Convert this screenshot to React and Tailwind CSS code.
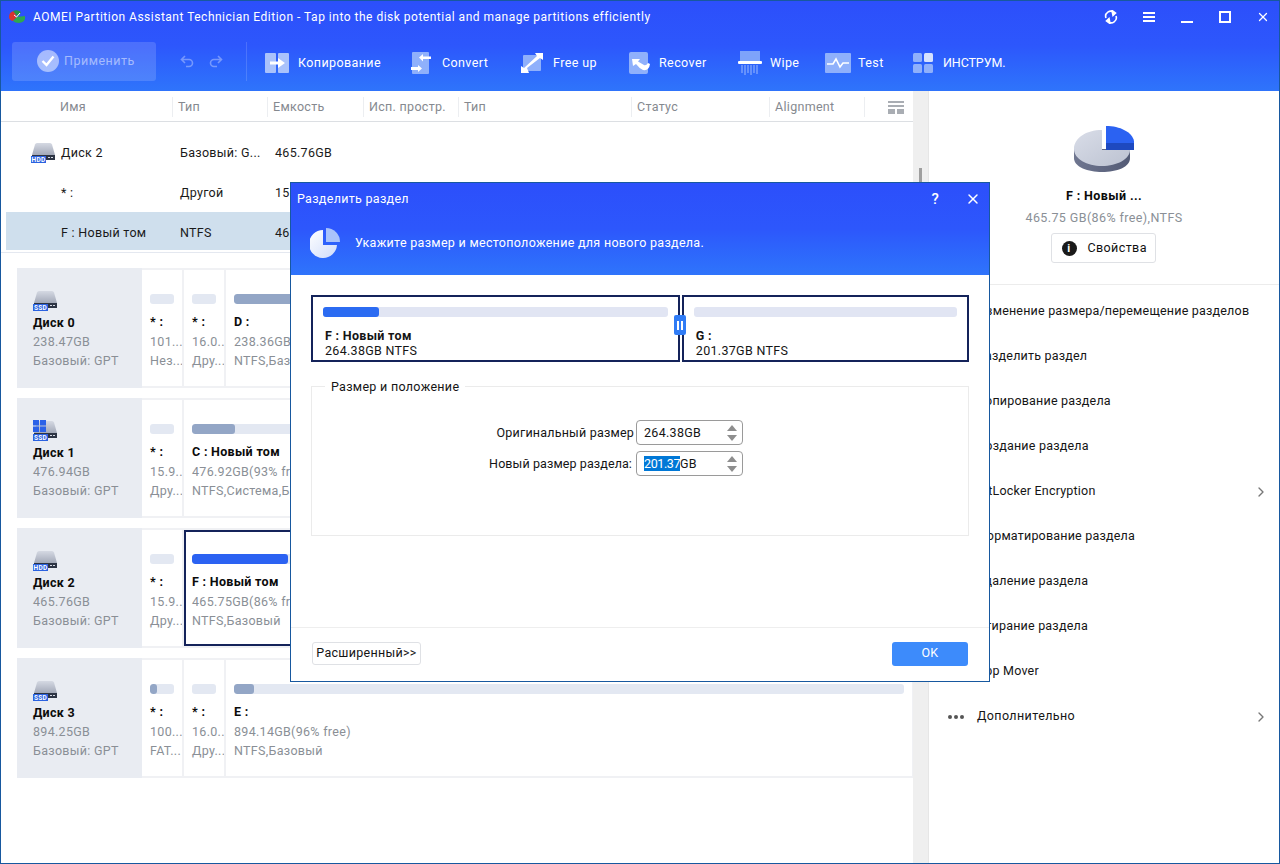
import { ChevronRight, X } from "lucide-react";

const columns = [
  ["Имя", 172, "pl-[59px]"],
  ["Тип", 95, "pl-[5px]"],
  ["Емкость", 96, "pl-[5px]"],
  ["Исп. простр.", 95, "pl-[5px]"],
  ["Тип", 173, "pl-[5px]"],
  ["Статус", 138, "pl-[5px]"],
  ["Alignment", 95, "pl-[5px]"],
];

const disks = [
  {
    name: "Диск 0",
    size: "238.47GB",
    kind: "SSD",
    parts: [
      { w: 40, name: "* :", a: "101....", b: "Нез...", fill: 0 },
      { w: 40, name: "* :", a: "16.0...", b: "Дру...", fill: 0 },
      { w: 686, name: "D :", a: "238.36GB(61% free)", b: "NTFS,Базовый", fill: 39 },
    ],
  },
  {
    name: "Диск 1",
    size: "476.94GB",
    kind: "SSD",
    windows: true,
    parts: [
      { w: 40, name: "* :", a: "15.9...", b: "Дру...", fill: 0 },
      { w: 728, name: "C : Новый том", a: "476.92GB(93% free)", b: "NTFS,Система,Базовый", fill: 6 },
    ],
  },
  {
    name: "Диск 2",
    size: "465.76GB",
    kind: "HDD",
    parts: [
      { w: 40, name: "* :", a: "15.9...", b: "Дру...", fill: 0 },
      { w: 728, name: "F : Новый том", a: "465.75GB(86% free)", b: "NTFS,Базовый", fill: 13.5, selected: true },
    ],
  },
  {
    name: "Диск 3",
    size: "894.25GB",
    kind: "SSD",
    parts: [
      { w: 40, name: "* :", a: "100....", b: "FAT...", fill: 28 },
      { w: 40, name: "* :", a: "16.0...", b: "Дру...", fill: 0 },
      { w: 686, name: "E :", a: "894.14GB(96% free)", b: "NTFS,Базовый", fill: 3 },
    ],
  },
];

const menu = [
  "Изменение размера/перемещение разделов",
  "Разделить раздел",
  "Копирование раздела",
  "Создание раздела",
  "BitLocker Encryption",
  "Форматирование раздела",
  "Удаление раздела",
  "Стирание раздела",
  "App Mover",
];

function DriveIcon({ kind, windows }) {
  return (
    <svg width="26" height="22" viewBox="0 0 26 22" className="block">
      <defs>
        <linearGradient id="driveTop" x1="0" y1="0" x2="0" y2="1">
          <stop offset="0" stopColor="#d5d9e3" />
          <stop offset="1" stopColor="#a3a9b8" />
        </linearGradient>
      </defs>
      <path d="M4 2.5Q4.5 1 6 1H19Q20.5 1 21 2.5L24 13H1Z" fill="url(#driveTop)" />
      <rect x="1" y="13" width="23" height="5" fill="#2c3444" />
      <rect x="17" y="15" width="2" height="1" fill="#d5d9e3" />
      <rect x="20" y="15" width="2" height="1" fill="#d5d9e3" />
      <rect x="0" y="14" width="15" height="7" fill="#2b62e0" />
      <text x="7.5" y="20" textAnchor="middle" fontSize="6.5" fontWeight="700" fill="#fff" fontFamily="Roboto, sans-serif">
        {kind}
      </text>
      {windows && (
        <g fill="#2b62e8">
          <rect x="0" y="0" width="6" height="5.5" />
          <rect x="7" y="0" width="6" height="5.5" />
          <rect x="0" y="6.5" width="6" height="5.5" />
          <rect x="7" y="6.5" width="6" height="5.5" />
        </g>
      )}
    </svg>
  );
}

function AppLogo() {
  return (
    <svg width="18" height="16" viewBox="0 0 18 16" className="block">
      <path d="M1 8Q1 3 6 2L9 8L5 12Q1 11 1 8Z" fill="#d8342f" />
      <path d="M5 2Q9 0 13 3L10 8Z" fill="#27954a" />
      <path d="M9 8L17 7Q18 13 11 14Q7 14 5 12Z" fill="#2fa84f" />
      <path d="M6 6L8.5 8L12 4" stroke="#fff" strokeWidth="1" fill="none" />
    </svg>
  );
}

function ToolIcon({ name }) {
  if (name === "copy")
    return (
      <svg width="24" height="20" viewBox="0 0 24 20">
        <rect x="0" y="0" width="11" height="20" rx="1" fill="#a9c2fb" />
        <rect x="13" y="0" width="11" height="20" rx="1" fill="#a9c2fb" />
        <path d="M5 8.5H13V5L20 10L13 15V11.5H5Z" fill="#fff" />
      </svg>
    );
  if (name === "convert")
    return (
      <svg width="20" height="22" viewBox="0 0 20 22">
        <rect x="1" y="0" width="17" height="22" rx="1" fill="#8fb0fb" />
        <path d="M8 5.5L12 2V4.5H20V7H12V9.5Z" fill="#fff" />
        <path d="M11 16.5L7 13V15H0V18H7V20Z" fill="#fff" />
      </svg>
    );
  if (name === "free")
    return (
      <svg width="22" height="20" viewBox="0 0 22 20">
        <rect x="2" y="2" width="18" height="16" rx="1" fill="#8fb0fb" />
        <path d="M14 0H22V7L19 5L6 15L8 20H0V13L3 15L16 3Z" fill="#fff" />
      </svg>
    );
  if (name === "recover")
    return (
      <svg width="21" height="22" viewBox="0 0 21 22">
        <rect x="0" y="0" width="19" height="22" rx="2" fill="#8fb0fb" />
        <path d="M3 7H11L9 9.5L15 13Q17 14 19 11L21 12Q20 19 14 18Q10 16 7 12L4 14Z" fill="#fff" />
      </svg>
    );
  if (name === "wipe")
    return (
      <svg width="24" height="24" viewBox="0 0 24 24">
        <rect x="2" y="0" width="20" height="10" fill="#7ea3fa" />
        <rect x="0" y="10" width="24" height="3" rx="1" fill="#fff" />
        <path d="M4 14V22M7 14V24M10 14V22M13 14V24M16 14V22M19 14V23" stroke="#9dbafc" strokeWidth="1" />
      </svg>
    );
  if (name === "test")
    return (
      <svg width="26" height="20" viewBox="0 0 26 20">
        <rect width="26" height="20" rx="1" fill="#8fb0fb" />
        <path d="M2 11H8L11 6L15 14L18 10H24" stroke="#fff" strokeWidth="1.6" fill="none" />
      </svg>
    );
  return (
    <svg width="20" height="20" viewBox="0 0 20 20">
      <rect x="0" y="0" width="9" height="9" rx="1.5" fill="#8fb0fb" />
      <rect x="11" y="0" width="9" height="9" rx="1.5" fill="#d5e1fe" />
      <rect x="0" y="11" width="9" height="9" rx="1.5" fill="#8fb0fb" />
      <rect x="11" y="11" width="9" height="9" rx="1.5" fill="#8fb0fb" />
    </svg>
  );
}

const tools = [
  ["copy", "Копирование", 146, 33],
  ["convert", "Convert", 110, 31],
  ["free", "Free up", 108, 32],
  ["recover", "Recover", 109, 30],
  ["wipe", "Wipe", 87, 32],
  ["test", "Test", 88, 33],
  ["tools", "ИНСТРУМ.", 100, 30],
];

function Header() {
  return (
    <div className="h-[90px] shrink-0 bg-gradient-to-b from-[#2c4ffb] via-[#2d57fc] to-[#2f74fb] text-white">
      <div className="flex h-[32px] items-center pl-[7px]">
        <AppLogo />
        <span className="ml-[7px] text-[12px] tracking-[0.5px]">
          AOMEI Partition Assistant Technician Edition - Tap into the disk potential and manage partitions efficiently
        </span>
        <div className="ml-auto flex items-center gap-[24px] pr-[9px]">
          <svg width="14" height="14" viewBox="0 0 14 14" fill="none" stroke="#fff" strokeWidth="1.6">
            <path d="M2 8A5 5 0 0 1 10 2.5" />
            <path d="M12 6A5 5 0 0 1 4 11.5" />
            <path d="M8 0.5L11.5 3L9 5.5Z" fill="#fff" />
            <path d="M6 13.5L2.5 11L5 8.5Z" fill="#fff" />
          </svg>
          <svg width="14" height="12" viewBox="0 0 14 12" fill="#fff">
            <rect x="1" y="1" width="12" height="2" />
            <rect x="1" y="5" width="12" height="2" />
            <rect x="1" y="9" width="12" height="2" />
          </svg>
          <div className="flex h-[14px] w-[14px] items-end justify-center pb-[1px]">
            <div className="h-[2px] w-[12px] bg-white" />
          </div>
          <div className="flex w-[14px] justify-center">
            <div className="h-[12px] w-[12px] border-2 border-white" />
          </div>
          <X size={14} strokeWidth={2.2} />
        </div>
      </div>
      <div className="flex h-[58px] items-center">
        <div className="mb-[2px] ml-[11px] flex h-[39px] w-[144px] items-center rounded-[3px] bg-white/15 pl-[25px]">
          <span className="flex h-[22px] w-[22px] items-center justify-center rounded-full bg-white/50">
            <svg width="14" height="12" viewBox="0 0 14 12" fill="none" stroke="#fff" strokeWidth="2.4">
              <path d="M1.5 6L5.5 10L12.5 1.5" />
            </svg>
          </span>
          <span className="ml-[5px] text-[12.5px] tracking-[0.5px] text-white/50">Применить</span>
        </div>
        <div className="mb-[2px] ml-[24px] flex w-[66px] gap-[13px]">
          <svg width="15" height="13" viewBox="0 0 15 13" fill="none" stroke="#fff" strokeOpacity="0.35" strokeWidth="1.6">
            <path d="M5 1L1.5 4.5L5 8M2 4.5H9A3.5 3.5 0 0 1 9 11.5H6" />
          </svg>
          <svg width="15" height="13" viewBox="0 0 15 13" fill="none" stroke="#fff" strokeOpacity="0.35" strokeWidth="1.6">
            <path d="M10 1L13.5 4.5L10 8M13 4.5H6A3.5 3.5 0 0 0 6 11.5H9" />
          </svg>
        </div>
        <div className="mb-[2px] h-[39px] w-px bg-white/15" />
        <div className="ml-[18px] flex pt-[2px]">
          {tools.map(([icon, label, w, offset]) => (
            <div key={label} className="flex items-center" style={{ width: w }}>
              <div className="flex shrink-0" style={{ width: offset }}>
                <ToolIcon name={icon} />
              </div>
              <span className={`text-[12.5px] ${icon === "tools" ? "tracking-[-0.1px]" : "tracking-[0.4px]"}`}>{label}</span>
            </div>
          ))}
        </div>
      </div>
    </div>
  );
}

function Cell({ part }) {
  const barBg = part.selected ? "bg-[#2b62f2]" : "bg-[#93a6c6]";
  return (
    <div
      className={`h-[116px] shrink-0 overflow-hidden whitespace-nowrap bg-white text-[12.5px] tracking-[0.3px] ${
        part.selected ? "border-2 border-[#14235a] pl-[6px] pt-[22px]" : "pl-[8px] pt-[24px]"
      }`}
      style={{ width: part.w }}
    >
      <div className="mr-[8px] h-[10px] overflow-hidden rounded-[3px] bg-[#e3e8f2]">
        <div className={`h-full rounded-[3px] ${barBg}`} style={{ width: `${part.fill}%` }} />
      </div>
      <div className="mt-[8px] h-[20px] leading-[20px] font-bold text-[#0b0b0b]">{part.name}</div>
      <div className="h-[19px] leading-[19px] text-[#8a8f96]">{part.a}</div>
      <div className="h-[19px] leading-[19px] text-[#8a8f96]">{part.b}</div>
    </div>
  );
}

function DiskRow({ disk }) {
  return (
    <div className="flex h-[120px] bg-[#f0f1f4]">
      <div className="w-[125px] shrink-0 bg-[#e9ecf2] pl-[16px] pt-[22px] text-[12.5px] tracking-[0.3px]">
        <DriveIcon kind={disk.kind} windows={disk.windows} />
        <div className="mt-[1px] h-[19px] leading-[19px] font-bold text-[#0b0b0b]">{disk.name}</div>
        <div className="h-[19px] leading-[19px] text-[#8a8f96]">{disk.size}</div>
        <div className="h-[19px] leading-[19px] text-[#8a8f96]">Базовый: GPT</div>
      </div>
      <div className="flex gap-[2px] py-[2px]">
        {disk.parts.map((p, i) => (
          <Cell key={i} part={p} />
        ))}
      </div>
    </div>
  );
}

function ListRow({ name, type, cap, selected, icon }) {
  return (
    <div className={`ml-[5px] flex h-[38px] items-center pt-[4px] text-[12.5px] tracking-[0.3px] text-[#1a1a1a] ${selected ? "bg-[#cfdfed]" : ""}`}>
      <div className="flex w-[174px] shrink-0 items-center pl-[55px]">
        {icon && (
          <div className="-ml-[30px] mr-[4px]">
            <DriveIcon kind="HDD" />
          </div>
        )}
        {name}
      </div>
      <div className="w-[95px] shrink-0">{type}</div>
      <div>{cap}</div>
    </div>
  );
}

function MainPanel() {
  return (
    <div className="flex w-[927px] shrink-0">
      <div className="w-[912px] shrink-0">
        <div className="flex h-[31px] items-center border-b border-[#dcdfe3] pt-[2px] text-[12.5px] tracking-[0.3px] text-[#85898f]">
          {columns.map(([label, w, pad], i) => (
            <div key={i} className={`flex h-[20px] items-center border-r border-[#eceef1] ${pad}`} style={{ width: w }}>
              {label}
            </div>
          ))}
          <svg width="16" height="13" viewBox="0 0 16 13" fill="#a9adb3" className="ml-[23px]">
            <rect width="16" height="2" />
            <rect y="4" width="16" height="2" />
            <rect y="8" width="7" height="5" />
            <rect x="9" y="8" width="7" height="5" />
          </svg>
        </div>
        <div className="pt-[10px]">
          <ListRow name="Диск 2" type="Базовый: G..." cap="465.76GB" icon />
          <div className="h-[2px]" />
          <ListRow name="* :" type="Другой" cap="15.98MB" />
          <div className="h-[2px]" />
          <ListRow name="F : Новый том" type="NTFS" cap="465.75GB" selected />
        </div>
        <div className="mt-[2px] h-px bg-[#e4e8f0]" />
        <div className="flex flex-col gap-[10px] pl-[16px] pt-[15px]">
          {disks.map((d) => (
            <DiskRow key={d.name} disk={d} />
          ))}
        </div>
      </div>
      <div className="flex w-[15px] shrink-0 flex-col bg-[#efefef]">
        <div className="ml-[6px] mt-[77px] h-[14px] w-[3px] bg-[#9f9f9f]" />
      </div>
    </div>
  );
}

function SidePie() {
  return (
    <svg width="62" height="48" viewBox="0 0 62 48" className="block">
      <defs>
        <linearGradient id="pieTop" x1="0" y1="0" x2="1" y2="1">
          <stop offset="0" stopColor="#d9dde8" />
          <stop offset="1" stopColor="#bcc2d1" />
        </linearGradient>
        <linearGradient id="pieSide" x1="0" y1="0" x2="1" y2="0">
          <stop offset="0" stopColor="#6f7690" />
          <stop offset="1" stopColor="#535b75" />
        </linearGradient>
      </defs>
      <path d="M0 23V32C0 41 14 46 28 46C43 46 56 41 56 32V23Z" fill="url(#pieSide)" />
      <path d="M28 4C12 4 0 12 0 23C0 33 13 40 28 40C43 40 56 33 56 24H28Z" fill="url(#pieTop)" />
      <path d="M32 0C46 0 58 6 60 15V24H32Z" fill="#2b62f2" />
      <path d="M32 17H60V24H32Z" fill="#1e49c0" />
    </svg>
  );
}

function SidePanel() {
  return (
    <div className="flex-1 border-l border-[#e6e6e6]">
      <div className="flex h-[194px] flex-col items-center border-b border-[#ececec] pt-[35px] text-[12.5px] tracking-[0.4px]">
        <div className="ml-[2px]">
          <SidePie />
        </div>
        <div className="mt-[12px] h-[19px] leading-[19px] font-bold text-[#0b0b0b]">F : Новый ...</div>
        <div className="mt-[3px] h-[19px] leading-[19px] text-[#8a8f96]">465.75 GB(86% free),NTFS</div>
        <div className="mr-[2px] mt-[6px] flex h-[30px] w-[105px] items-center rounded-[3px] border border-[#dfe1e5] pl-[10px] text-[#111]">
          <span className="flex h-[15px] w-[15px] items-center justify-center rounded-full bg-[#1a1a1a] text-[11px] leading-none font-bold text-white">i</span>
          <span className="ml-[11px]">Свойства</span>
        </div>
      </div>
      <div className="pt-[4px] text-[12.5px] tracking-[0.2px] text-[#151515]">
        {menu.map((m) => (
          <div key={m} className="flex h-[45px] items-center pl-[48px] pr-[10px]">
            <span>{m}</span>
            {m === "BitLocker Encryption" && <ChevronRight size={16} className="ml-auto text-[#777]" />}
          </div>
        ))}
        <div className="flex h-[45px] items-center pl-[19px] pr-[10px] tracking-[0.4px]">
          <span className="flex w-[29px] gap-[2px]">
            <i className="h-[4px] w-[4px] rounded-full bg-[#555]" />
            <i className="h-[4px] w-[4px] rounded-full bg-[#555]" />
            <i className="h-[4px] w-[4px] rounded-full bg-[#555]" />
          </span>
          <span>Дополнительно</span>
          <ChevronRight size={16} className="ml-auto text-[#777]" />
        </div>
      </div>
    </div>
  );
}

function Spinner({ value, selected }) {
  return (
    <div className="relative flex h-[25px] w-[107px] items-center rounded-[4px] border border-[#9a9a9a] pl-[7px] pt-[1px]">
      {selected ? (
        <span>
          <span className="bg-[#0078d7] tracking-[-0.4px] text-white">{selected}</span>
          {value}
        </span>
      ) : (
        <span>{value}</span>
      )}
      <div className="absolute right-[5px] top-[4px] flex flex-col gap-[4px]">
        <svg width="10" height="6" viewBox="0 0 10 6" fill="#8e8e8e"><path d="M5 0L10 6H0Z" /></svg>
        <svg width="10" height="6" viewBox="0 0 10 6" fill="#8e8e8e"><path d="M0 0H10L5 6Z" /></svg>
      </div>
    </div>
  );
}

function Dialog() {
  return (
    <div className="absolute left-[289px] top-[181px] flex h-[500px] w-[700px] flex-col border border-[#17589f] bg-white text-[12.5px] tracking-[0.3px] text-[#151515]">
      <div className="h-[92px] shrink-0 bg-gradient-to-b from-[#2c4ffb] via-[#2d57fc] to-[#2f74fb] text-white">
        <div className="flex h-[32px] items-center pl-[6px]">
          <span>Разделить раздел</span>
          <span className="ml-auto mr-[26px] text-[15px] font-medium">?</span>
          <X size={16} strokeWidth={2.2} className="mr-[8px]" />
        </div>
        <div className="flex h-[56px] items-center pl-[19px]">
          <svg width="30" height="30" viewBox="0 0 30 30">
            <defs>
              <linearGradient id="dlgPie" x1="0" y1="0" x2="1" y2="1">
                <stop offset="0" stopColor="#ffffff" />
                <stop offset="1" stopColor="#cfdcfb" />
              </linearGradient>
            </defs>
            <path d="M14 2A14 14 0 1 0 28 17H14Z" fill="url(#dlgPie)" transform="translate(-1 0)" />
            <path d="M16 0A14 14 0 0 1 30 14H16Z" fill="#a9c3fb" />
          </svg>
          <span className="ml-[15px]">Укажите размер и местоположение для нового раздела.</span>
        </div>
      </div>
      <div className="relative mx-[20px] mt-[20px] flex h-[67px] gap-[2px]">
        <div className="w-[370px] border-2 border-[#14235a] pl-[10px] pr-[10px] pt-[10px]">
          <div className="h-[10px] rounded-[3px] bg-[#e1e5f3]">
            <div className="h-full w-[16.2%] rounded-[3px] bg-[#2b6bf2]" />
          </div>
          <div className="ml-[2px] mt-[11px] h-[15px] leading-[15px] font-bold">F : Новый том</div>
          <div className="ml-[2px] h-[16px] leading-[16px]">264.38GB NTFS</div>
        </div>
        <div className="w-[288px] border-2 border-[#14235a] pl-[10px] pr-[10px] pt-[10px]">
          <div className="h-[10px] rounded-[3px] bg-[#e1e5f3]" />
          <div className="ml-[2px] mt-[11px] h-[15px] leading-[15px] font-bold">G :</div>
          <div className="ml-[2px] h-[16px] leading-[16px]">201.37GB NTFS</div>
        </div>
        <div className="absolute left-[363px] top-[20px] flex h-[20px] w-[12px] items-center justify-center gap-[2px] rounded-[2px] bg-[#2f7bf5]">
          <i className="h-[9px] w-[2px] bg-white" />
          <i className="h-[9px] w-[2px] bg-white" />
        </div>
      </div>
      <div className="relative mx-[20px] mt-[24px] h-[150px] w-[658px] border border-[#ebebeb]">
        <span className="absolute -top-[9px] left-[13px] bg-white px-[6px]">Размер и положение</span>
        <div className="flex flex-col gap-[6px] pl-[174px] pt-[33px]">
          <div className="flex items-center">
            <span className="w-[150px] pr-[2px] pt-[1px] text-right tracking-[0.2px] whitespace-nowrap">Оригинальный размер</span>
            <Spinner value="264.38GB" />
          </div>
          <div className="flex items-center">
            <span className="w-[150px] pr-[4px] pt-[1px] text-right tracking-[0.1px] whitespace-nowrap">Новый размер раздела:</span>
            <Spinner value="GB" selected="201.37" />
          </div>
        </div>
      </div>
      <div className="mt-auto flex h-[54px] items-center justify-between border-t border-[#eeeeee] pb-[2px] pl-[21px] pr-[21px]">
        <div className="flex h-[23px] w-[109px] items-center justify-center rounded-[3px] border border-[#dfe1e5] whitespace-nowrap">Расширенный&gt;&gt;</div>
        <div className="flex h-[24px] w-[76px] items-center justify-center rounded-[3px] bg-[#3d8bfb] text-white">OK</div>
      </div>
    </div>
  );
}

export default function App() {
  return (
    <div className="relative flex h-[864px] w-[1280px] flex-col overflow-hidden border border-[#17589f] bg-white font-[Roboto,sans-serif]">
      <Header />
      <div className="flex flex-1">
        <MainPanel />
        <SidePanel />
      </div>
      <Dialog />
    </div>
  );
}
